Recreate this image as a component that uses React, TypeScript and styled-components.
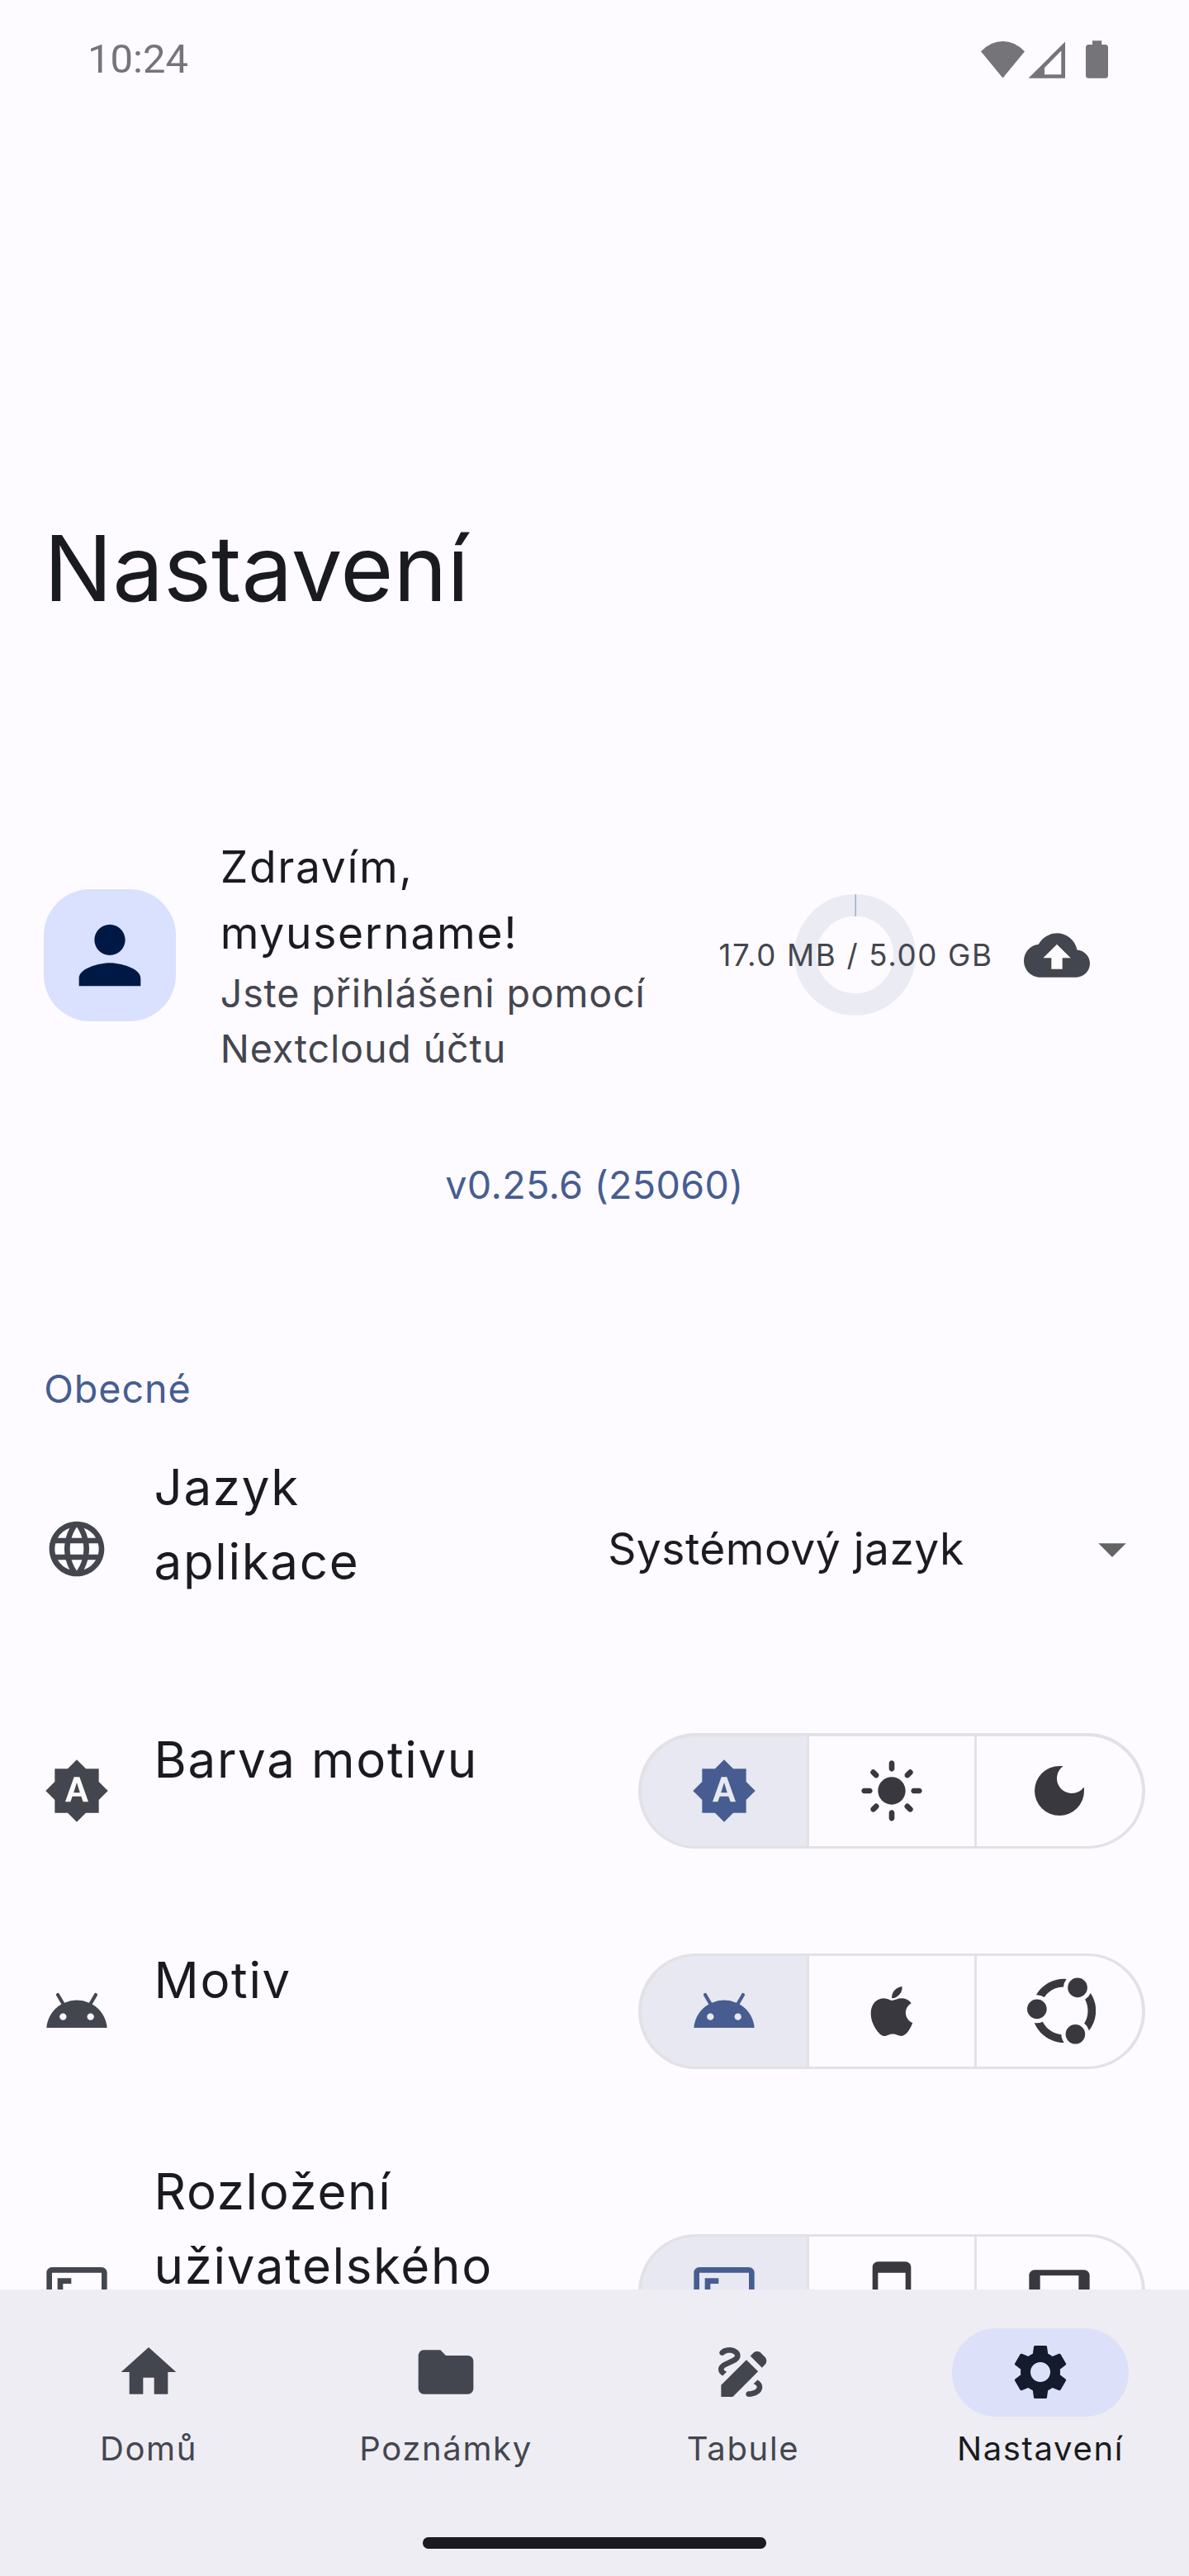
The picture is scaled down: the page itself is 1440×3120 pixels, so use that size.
import React from "react";
import styled, { createGlobalStyle } from "styled-components";
import {
  MdAndroid,
  MdAspectRatio,
  MdBackup,
  MdBrightnessAuto,
  MdDarkMode,
  MdDraw,
  MdFolder,
  MdHome,
  MdLanguage,
  MdLightMode,
  MdPerson,
  MdSettings,
  MdSmartphone,
  MdTablet,
} from "react-icons/md";

const color = {
  surface: "#fdfbff",
  container: "#eeedf3",
  onSurface: "#1a1b20",
  variant: "#44464f",
  primary: "#475d92",
  primaryContainer: "#dae1ff",
  onPrimaryContainer: "#001944",
  secondaryContainer: "#dce1f9",
  onSecondaryContainer: "#141b2c",
  outline: "#e2e1e5",
  selected: "#e7e8f1",
  control: "#39383e",
  status: "#757478",
};

const GlobalStyle = createGlobalStyle`
  *, *::before, *::after { box-sizing: border-box; }
  body {
    margin: 0;
    background: ${color.surface};
    color: ${color.onSurface};
    font-family: Inter, "Liberation Sans", sans-serif;
    font-weight: 400;
  }
  svg { display: block; flex: none; }
`;

const Screen = styled.div`
  display: flex;
  flex-direction: column;
  width: 1440px;
  height: 3120px;
  overflow: hidden;
  background: ${color.surface};
`;

const StatusBar = styled.header`
  display: flex;
  flex: none;
  align-items: center;
  justify-content: space-between;
  height: 144px;
  padding: 0 98px 0 106px;
  color: ${color.status};
`;

const Clock = styled.span`
  font: 400 49px/56px Roboto, sans-serif;
`;

const StatusIcons = styled.div`
  display: flex;
`;

const Content = styled.main`
  flex: 1;
  min-height: 0;
  overflow: hidden;
`;

const PageTitle = styled.h1`
  margin: 0;
  padding: 475.5px 53.3px 0;
  font-size: 110px;
  line-height: 136px;
  font-weight: 400;
`;

const Account = styled.section`
  display: flex;
  align-items: center;
  height: 373px;
  margin-top: 215px;
  padding: 0 120px 0 53.3px;
`;

const Avatar = styled.div`
  display: grid;
  place-items: center;
  flex: none;
  width: 160px;
  height: 160px;
  border-radius: 56px;
  background: ${color.primaryContainer};
  color: ${color.onPrimaryContainer};
`;

const AccountText = styled.div`
  flex: 1;
  margin-left: 53.4px;
`;

const Greeting = styled.div`
  width: 420px;
  font-size: 53.33px;
  line-height: 80px;
  letter-spacing: 1.67px;
`;

const AccountNote = styled.div`
  width: 540px;
  font-size: 46.67px;
  line-height: 66.67px;
  letter-spacing: 0.83px;
  color: ${color.variant};
`;

const Quota = styled.div`
  display: grid;
  place-items: center;
  width: 329px;
  margin-right: 40.5px;
  > * { grid-area: 1 / 1; }
  > svg { margin: 0 3px 1px 0; }
`;

const QuotaLabel = styled.span`
  font-size: 36.67px;
  line-height: 53.3px;
  letter-spacing: 1.67px;
  white-space: nowrap;
  color: ${color.variant};
`;

const Version = styled.div`
  margin-top: 58.7px;
  text-align: center;
  font-size: 46.67px;
  line-height: 66.67px;
  letter-spacing: 0.33px;
  color: ${color.primary};
`;

const SectionTitle = styled.h2`
  margin: 180.4px 0 0 53.3px;
  font-size: 46.67px;
  line-height: 66.67px;
  font-weight: 400;
  letter-spacing: 0.9px;
  color: ${color.primary};
`;

const Row = styled.section<{ $height: number }>`
  display: flex;
  align-items: center;
  height: ${(p) => p.$height}px;
  padding: 0 53.3px;
  color: ${color.variant};
`;

const RowTitle = styled.div<{ $top: number }>`
  flex: 1;
  align-self: flex-start;
  margin-left: 53.3px;
  padding-top: ${(p) => p.$top}px;
  font-size: 60px;
  line-height: 90px;
  letter-spacing: 1.67px;
  color: ${color.onSurface};
`;

const Select = styled.div`
  display: flex;
  align-items: center;
  justify-content: space-between;
  width: 786px;
  padding: 0 0 0 135.5px;
  font-size: 53.33px;
  line-height: 80px;
  letter-spacing: 0.45px;
  color: #1c1b20;
`;

const Segments = styled.div`
  display: grid;
  grid-template-columns: repeat(3, 200px);
  gap: 3.33px;
  flex: none;
  width: 613.3px;
  height: 140px;
  padding: 3.33px;
  border-radius: 70px;
  background: ${color.outline};
  overflow: hidden;
`;

const Segment = styled.div<{ $selected?: boolean }>`
  display: grid;
  place-items: center;
  background: ${(p) => (p.$selected ? color.selected : color.surface)};
  color: ${(p) => (p.$selected ? color.primary : color.control)};
  &:first-child { border-radius: 66.7px 0 0 66.7px; }
  &:last-child { border-radius: 0 66.7px 66.7px 0; }
`;

const NavBar = styled.nav`
  display: flex;
  flex-direction: column;
  flex: none;
  height: 346.67px;
  background: ${color.container};
`;

const NavItems = styled.div`
  display: grid;
  grid-template-columns: repeat(4, 1fr);
  padding-top: 46.67px;
`;

const NavItem = styled.div<{ $active?: boolean }>`
  display: flex;
  flex-direction: column;
  align-items: center;
  gap: 12.3px;
  font-size: 40px;
  line-height: 53.3px;
  letter-spacing: 1.67px;
  color: ${(p) => (p.$active ? color.onSurface : color.variant)};
`;

const NavPill = styled.span<{ $active?: boolean }>`
  display: grid;
  place-items: center;
  width: 213.3px;
  height: 106.67px;
  border-radius: 53.33px;
  background: ${(p) => (p.$active ? color.secondaryContainer : "transparent")};
  color: ${(p) => (p.$active ? color.onSecondaryContainer : color.variant)};
`;

const HomeIndicator = styled.div`
  width: 416px;
  height: 13.5px;
  margin: auto auto 33.3px;
  border-radius: 6.7px;
  background: ${color.onSurface};
`;

const Apple = () => (
  <svg width="80" height="80" viewBox="0 0 24 24" fill="currentColor">
    <path d="M17.05 20.28c-.98.95-2.05.8-3.08.35-1.09-.46-2.09-.48-3.24 0-1.44.62-2.2.44-3.06-.35C2.79 15.25 3.51 7.59 9.05 7.31c1.35.07 2.29.74 3.08.8 1.18-.24 2.31-.93 3.57-.84 1.51.12 2.65.72 3.4 1.8-3.12 1.87-2.38 5.98.48 7.13-.57 1.5-1.31 2.99-2.54 4.09zM12.03 7.25c-.15-2.23 1.66-4.07 3.74-4.25.29 2.58-2.34 4.5-3.74 4.25z" />
  </svg>
);

const Ubuntu = () => (
  <svg width="87.2" height="83.2" viewBox="-1.16 0 25.16 24" fill="currentColor">
    <path d="M17.61.455a3.41 3.41 0 0 0-3.41 3.41 3.41 3.41 0 0 0 3.41 3.41 3.41 3.41 0 0 0 3.41-3.41 3.41 3.41 0 0 0-3.41-3.41zM12.92.8C8.923.777 5.137 2.941 3.148 6.451a4.5 4.5 0 0 1 .26-.007 4.92 4.92 0 0 1 2.585.737A8.316 8.316 0 0 1 12.688 3.6 4.944 4.944 0 0 1 13.723.834 11.008 11.008 0 0 0 12.92.8zm9.226 4.994a4.915 4.915 0 0 1-1.918 2.246 8.36 8.36 0 0 1-.273 8.303 4.89 4.89 0 0 1 1.632 2.54 11.156 11.156 0 0 0 .559-13.089zM3.41 7.932a3.41 3.41 0 0 0-3.41 3.41 3.41 3.41 0 0 0 3.41 3.409 3.41 3.41 0 0 0 3.41-3.41 3.41 3.41 0 0 0-3.41-3.41zm2.027 7.866a4.908 4.908 0 0 1-2.915.358 11.1 11.1 0 0 0 7.991 6.698 11.234 11.234 0 0 0 2.422.249 4.879 4.879 0 0 1-.999-2.85 8.484 8.484 0 0 1-.836-.136 8.304 8.304 0 0 1-5.663-4.32zm11.405.928a3.41 3.41 0 0 0-3.41 3.41 3.41 3.41 0 0 0 3.41 3.41 3.41 3.41 0 0 0 3.41-3.41 3.41 3.41 0 0 0-3.41-3.41z" />
  </svg>
);

const Signals = () => (
  <svg width="156" height="48" viewBox="1186 48 156 48" fill="currentColor">
    <path d="M1214.5 94.5 1188 62.2Q1200 50 1214.5 50T1241 62.2Z" />
    <path fillRule="evenodd" d="M1290 50.5V94.700H1245.500ZM1285.300 61.500 1265 82V90.300H1285.300Z" />
    <path d="M1323 49.200h11.200v4.800h4.300a3.500 3.500 0 0 1 3.500 3.500V91.200a3.500 3.500 0 0 1-3.500 3.500h-20a3.500 3.500 0 0 1-3.500-3.500V57.500a3.500 3.500 0 0 1 3.500-3.500h4.500z" />
  </svg>
);

const QuotaRing = () => (
  <svg width="147" height="147" viewBox="0 0 147 147" fill="none">
    <circle cx="73.5" cy="73.5" r="60" stroke="#eaebf3" strokeWidth="26.67" />
    <path d="M74.2 0.2V26.900" stroke="#a3afcb" strokeWidth="1.600" />
  </svg>
);

const Caret = () => (
  <svg width="80" height="80" viewBox="0 0 24 24" fill="#646464">
    <path d="M7 10l5 5 5-5z" />
  </svg>
);

const rows = [
  {
    title: "Barva motivu",
    height: 266.67,
    top: 50,
    Icon: MdBrightnessAuto,
    options: [MdBrightnessAuto, MdLightMode, MdDarkMode],
  },
  {
    title: "Motiv",
    height: 266.67,
    top: 50,
    Icon: MdAndroid,
    options: [MdAndroid, Apple, Ubuntu],
  },
  {
    title: "Rozložení uživatelského",
    height: 413.33,
    top: 40,
    Icon: MdAspectRatio,
    options: [MdAspectRatio, MdSmartphone, MdTablet],
  },
];

const tabs = [
  { label: "Domů", Icon: MdHome },
  { label: "Poznámky", Icon: MdFolder },
  { label: "Tabule", Icon: MdDraw },
  { label: "Nastavení", Icon: MdSettings, active: true },
];

export default function App() {
  return (
    <>
      <GlobalStyle />
      <Screen>
        <StatusBar>
          <Clock>10:24</Clock>
          <StatusIcons>
            <Signals />
          </StatusIcons>
        </StatusBar>
        <Content>
          <PageTitle>Nastavení</PageTitle>
          <Account>
            <Avatar>
              <MdPerson size={112} />
            </Avatar>
            <AccountText>
              <Greeting>Zdravím, myusername!</Greeting>
              <AccountNote>Jste přihlášeni pomocí Nextcloud účtu</AccountNote>
            </AccountText>
            <Quota>
              <QuotaRing />
              <QuotaLabel>17.0 MB / 5.00 GB</QuotaLabel>
            </Quota>
            <MdBackup size={80} color={color.variant} />
          </Account>
          <Version>v0.25.6 (25060)</Version>
          <SectionTitle>Obecné</SectionTitle>
          <Row $height={320}>
            <MdLanguage size={80} />
            <RowTitle $top={40}>Jazyk aplikace</RowTitle>
            <Select>
              Systémový jazyk
              <Caret />
            </Select>
          </Row>
          {rows.map(({ title, height, top, Icon, options }) => (
            <Row key={title} $height={height}>
              <Icon size={80} />
              <RowTitle $top={top}>{title}</RowTitle>
              <Segments>
                {options.map((Option, i) => (
                  <Segment key={i} $selected={i === 0}>
                    <Option size={80} />
                  </Segment>
                ))}
              </Segments>
            </Row>
          ))}
        </Content>
        <NavBar>
          <NavItems>
            {tabs.map(({ label, Icon, active }) => (
              <NavItem key={label} $active={active}>
                <NavPill $active={active}>
                  <Icon size={80} />
                </NavPill>
                {label}
              </NavItem>
            ))}
          </NavItems>
          <HomeIndicator />
        </NavBar>
      </Screen>
    </>
  );
}
